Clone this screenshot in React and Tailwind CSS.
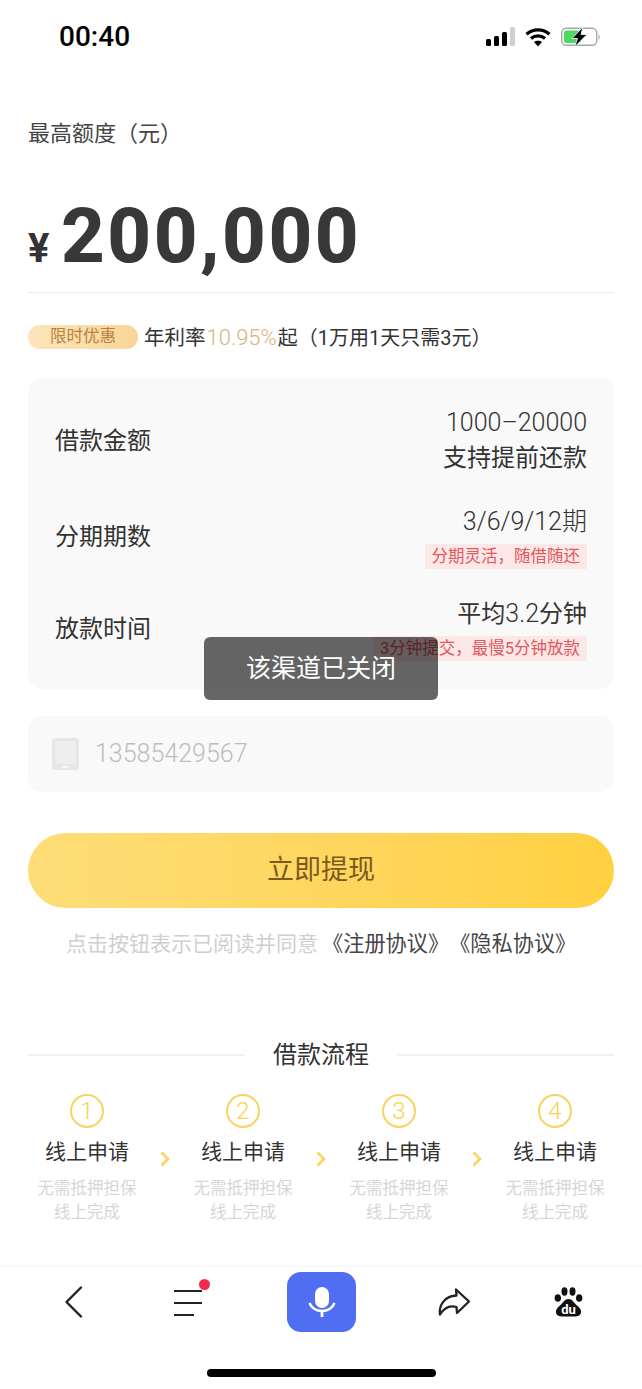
import React from 'react';

const FONT = "font-['Roboto','Noto_Sans_CJK_SC',sans-serif]";

const StatusBar = () => (
  <div className="flex h-[74px] items-center justify-between pl-[59px] pr-[41px]">
    <span className="font-['Roboto',sans-serif] text-[28px] font-medium leading-none text-black">00:40</span>
    <div className="flex items-center gap-[10px]">
      <svg width="29" height="20" viewBox="0 0 29 20">
        <rect x="0" y="12" width="5" height="7" rx="1.5" fill="#000" />
        <rect x="8" y="9" width="5" height="10" rx="1.5" fill="#000" />
        <rect x="16" y="5" width="5" height="14" rx="1.5" fill="#000" />
        <rect x="24" y="0" width="5" height="19" rx="1.5" fill="#d0d0d0" />
      </svg>
      <svg width="26" height="20" viewBox="0 0 26 20">
        <path d="M1.5 7.2C7.8 1.4 18.2 1.4 24.5 7.2" fill="none" stroke="#000" strokeWidth="3.2" />
        <path d="M6 11.5C10 8 16 8 20 11.5" fill="none" stroke="#000" strokeWidth="3.2" />
        <path d="M9 15L13 19.5 17 15C15 13.2 11 13.2 9 15Z" fill="#000" />
      </svg>
      <svg width="40" height="20" viewBox="0 0 40 20">
        <rect x="0.7" y="1.2" width="35" height="17" rx="4.5" fill="none" stroke="#a8a8a8" strokeWidth="1.4" />
        <rect x="3" y="3.5" width="17" height="12.5" rx="2" fill="#4cd964" />
        <path d="M37.5 7C39 7.5 39 12.5 37.5 13Z" fill="#a8a8a8" />
        <path d="M22 0L11 11.5H16.5L13.5 20 26 7.5H20Z" fill="#000" stroke="#fff" strokeWidth="0.8" />
      </svg>
    </div>
  </div>
);

const Tag = ({ children }) => (
  <span className="inline-block h-[25px] bg-[#fde8e8] px-[7px] text-[16.5px] leading-[25px] text-[#e2575c]">{children}</span>
);

const InfoRow = ({ label, className, children }) => (
  <div className={`flex items-center justify-between ${className}`}>
    <span className="text-[24px] leading-[32px] text-[#333]">{label}</span>
    <div className="flex flex-col items-end text-[24px] text-[#333]">{children}</div>
  </div>
);

const Step = ({ num }) => (
  <div className="flex w-[120px] flex-col items-center">
    <div className="flex h-[34px] w-[34px] items-center justify-center rounded-full border-2 border-[#f9d35f] text-[24px] font-light leading-none text-[#f9d14a]">
      {num}
    </div>
    <div className="mt-[8px] text-[21px] leading-[32px] text-[#333]">线上申请</div>
    <div className="mt-[9px] text-center text-[16.5px] leading-[24px] text-[#d6d6d6]">
      无需抵押担保
      <br />
      线上完成
    </div>
  </div>
);

const Arrow = () => (
  <svg className="mt-[57px] w-[12px] shrink-0" width="12" height="16" viewBox="0 0 12 16">
    <path d="M2.5 1.5L9 8 2.5 14.5" fill="none" stroke="#fbd45c" strokeWidth="2.6" />
  </svg>
);

const BottomNav = () => (
  <div className="mt-auto h-[123px] border-t border-[#f6f6f6]">
    <div className="flex h-[86px] items-start pt-[5px]">
      <div className="flex w-[287px] items-start pl-[64px] pt-[14px]">
        <svg width="20" height="32" viewBox="0 0 20 32">
          <path d="M17 1.5L2.5 16 17 30.5" fill="none" stroke="#222" strokeWidth="2.4" strokeLinecap="round" strokeLinejoin="round" />
        </svg>
        <div className="relative ml-[90px] mt-[3px] flex h-[28px] w-[28px] flex-col justify-between py-px">
          <span className="h-[2px] w-[28px] bg-[#222]" />
          <span className="h-[2px] w-[28px] bg-[#222]" />
          <span className="h-[2px] w-[20px] bg-[#222]" />
          <span className="absolute right-[-8px] top-[-10px] h-[11px] w-[11px] rounded-full bg-[#f5284e]" />
        </div>
      </div>
      <div className="flex h-[60px] w-[69px] items-center justify-center rounded-[14px] bg-[#4f6ef2]">
        <svg width="28" height="30" viewBox="0 0 28 30">
          <rect x="7" y="0" width="14" height="21" rx="7" fill="#fff" />
          <path d="M1.5 16C3 20.5 8 24 14 24S25 20.5 26.5 16" fill="none" stroke="#fff" strokeWidth="2.4" />
          <path d="M14 23.5V30" stroke="#fff" strokeWidth="2.8" />
        </svg>
      </div>
      <div className="pl-[81px] pt-[15px]">
        <svg width="34" height="30" viewBox="0 0 34 30">
          <path
            d="M19 2.5L32 14.5 20 26 19.5 20C13 18 7 21 3 27.5 1.5 18 8 9 19.5 8.5Z"
            fill="none"
            stroke="#222"
            strokeWidth="2.3"
            strokeLinejoin="round"
          />
        </svg>
      </div>
      <div className="pl-[83px] pt-[15px]">
        <svg width="29" height="30" viewBox="0 0 29 30">
          <ellipse cx="3.8" cy="11" rx="3.2" ry="3.8" fill="#111" />
          <ellipse cx="10.5" cy="4.5" rx="3" ry="4.2" fill="#111" />
          <ellipse cx="18.5" cy="4.5" rx="3" ry="4.2" fill="#111" />
          <ellipse cx="25.2" cy="11" rx="3.2" ry="3.8" fill="#111" />
          <path d="M14.5 12C10.5 12 9.5 15.5 6.5 18 3 21 1.5 23 2 25.5 2.5 28.5 5 29.5 9 29.5H20C24 29.5 26.5 28.5 27 25.5 27.5 23 26 21 22.5 18 19.5 15.5 18.5 12 14.5 12Z" fill="#111" />
          <text x="14.5" y="27" textAnchor="middle" fontSize="13" fontWeight="700" fill="#fff" fontFamily="Roboto, sans-serif">du</text>
        </svg>
      </div>
    </div>
    <div className="mt-[16px] flex justify-center">
      <span className="h-[8px] w-[229px] rounded-full bg-black" />
    </div>
  </div>
);

export default function App() {
  return (
    <div className={`relative flex h-[1389px] w-[642px] flex-col overflow-hidden bg-white ${FONT}`}>
      <StatusBar />

      <div className="px-[28px]">
        <div className="mt-[44px] text-[22px] leading-[32px] text-[#444]">最高额度（元）</div>

        <div className="mt-[48px] flex h-[76px] items-baseline">
          <span className="w-[33px] font-['Roboto',sans-serif] text-[40px] font-bold leading-[76px] text-[#333]">¥</span>
          <span className="font-['Roboto',sans-serif] text-[76px] font-extrabold leading-[76px] tracking-[2.5px] text-[#383838]">200,000</span>
        </div>
        <div className="mt-[18px] h-px bg-[#eaeaea]" />

        <div className="mt-[32px] flex h-[24px] items-center">
          <span className="flex h-[24px] w-[110px] items-center justify-center rounded-full bg-linear-to-r from-[#fce5bb] to-[#f8d595] text-[16.5px] text-[#b5843f]">
            限时优惠
          </span>
          <span className="ml-[6px] whitespace-nowrap text-[20px] text-[#333]">
            <span className="text-[20.5px]">年利率</span>
            <span className="ml-px mr-px text-[22px] font-light text-[#dcb081]">10.95%</span>起（1万用1天只需3元）
          </span>
        </div>

        <div className="mt-[29px] h-[311px] rounded-[14px] bg-[#f9f9f9] px-[27px] pt-[28px]">
          <InfoRow label="借款金额">
            <span className="text-[25px] font-light leading-[34px]">1000–20000</span>
            <span className="leading-[36px]">支持提前还款</span>
          </InfoRow>
          <InfoRow label="分期期数" className="mt-[29px]">
            <span className="text-[25px] font-light leading-[34px]">3/6/9/12期</span>
            <div className="mt-[5px] flex"><Tag>分期灵活，随借随还</Tag></div>
          </InfoRow>
          <InfoRow label="放款时间" className="mt-[28px]">
            <span className="leading-[34px]">平均<span className="text-[25px] font-light">3.2</span>分钟</span>
            <div className="mt-[5px] flex"><Tag>3分钟提交，最慢5分钟放款</Tag></div>
          </InfoRow>
        </div>

        <div className="mt-[27px] flex h-[76px] items-center rounded-[14px] bg-[#f9f9f9] pl-[24px]">
          <svg width="27" height="32" viewBox="0 0 27 32">
            <rect width="27" height="32" rx="3" fill="#e6e6e6" />
            <rect x="3.5" y="3" width="20" height="23" fill="#eeeeee" />
            <rect x="10" y="28" width="7" height="2" rx="1" fill="#f6f6f6" />
          </svg>
          <span className="ml-[16px] text-[25px] font-light text-[#bdbdbd]">13585429567</span>
        </div>

        <button className="mt-[41px] flex h-[75px] w-full items-center justify-center rounded-full bg-linear-to-r from-[#fedd78] to-[#ffd03f] text-[27px] text-[#7b5a20]">
          立即提现
        </button>

        <div className="mt-[20px] whitespace-nowrap pl-[38px] text-[21px] leading-[32px] text-[#cfcfcf] [text-spacing-trim:space-all]">
          点击按钮表示已阅读并同意
          <span className="ml-[4px] text-[21.2px] text-[#444]">《注册协议》《隐私协议》</span>
        </div>

        <div className="mt-[79px] flex items-center">
          <span className="h-[2px] flex-1 bg-[#f1f1f1]" />
          <span className="mx-[28px] text-[24px] leading-[32px] text-[#333]">借款流程</span>
          <span className="h-[2px] flex-1 bg-[#f1f1f1]" />
        </div>

        <div className="-mx-[1px] mt-[23px] flex justify-between">
          <Step num="1" />
          <Arrow />
          <Step num="2" />
          <Arrow />
          <Step num="3" />
          <Arrow />
          <Step num="4" />
        </div>
      </div>

      <BottomNav />

      {/* toast over the card */}
      <div className="absolute left-[204px] top-[637px] flex h-[63px] w-[234px] items-center justify-center rounded-[6px] bg-black/60 text-[25px] text-white">
        该渠道已关闭
      </div>
    </div>
  );
}
